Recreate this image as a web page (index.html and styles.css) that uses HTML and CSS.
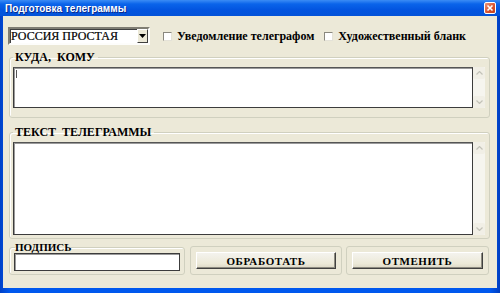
FILE: index.html
```html
<!DOCTYPE html>
<html lang="ru">
<head>
  <meta charset="UTF-8">
  <title>Подготовка телеграммы</title>
  <link rel="stylesheet" href="styles.css">
</head>
<body>
  <div class="window">
    <!-- Title bar -->
    <div class="titlebar">
      <span class="title">Подготовка телеграммы</span>
      <span class="close-btn">
        <svg width="10" height="10" viewBox="0 0 10 10">
          <path d="M2.5 2.5 L7.5 7.5 M7.5 2.5 L2.5 7.5" stroke="#fff" stroke-width="1.6"/>
        </svg>
      </span>
    </div>

    <div class="client">
      <!-- Top row: tariff + options -->
      <div class="top-row">
        <div class="combo">
          <span class="combo-text">РОССИЯ ПРОСТАЯ</span>
          <span class="combo-btn">
            <svg width="7" height="4" viewBox="0 0 7 4"><path d="M0 0 H7 L3.5 4 Z" fill="#000"/></svg>
          </span>
        </div>
        <label class="check"><span class="box"></span>Уведомление телеграфом</label>
        <label class="check check-second"><span class="box"></span>Художественный бланк</label>
      </div>

      <!-- Address -->
      <fieldset class="group group-address">
        <legend>КУДА,&nbsp; КОМУ</legend>
        <div class="field-row">
          <div class="memo memo-address"><span class="caret"></span></div>
          <div class="scrollbar">
            <span class="sb-btn"><svg width="7" height="4" viewBox="0 0 7 4"><path d="M0.5 3.5 L3.5 0.5 L6.5 3.5" fill="none" stroke="#c3c2b8" stroke-width="1.2"/></svg></span>
            <span class="sb-btn"><svg width="7" height="4" viewBox="0 0 7 4"><path d="M0.5 0.5 L3.5 3.5 L6.5 0.5" fill="none" stroke="#c3c2b8" stroke-width="1.2"/></svg></span>
          </div>
        </div>
      </fieldset>

      <!-- Telegram text -->
      <fieldset class="group group-text">
        <legend>ТЕКСТ&nbsp; ТЕЛЕГРАММЫ</legend>
        <div class="field-row">
          <div class="memo memo-text"></div>
          <div class="scrollbar">
            <span class="sb-btn"><svg width="7" height="4" viewBox="0 0 7 4"><path d="M0.5 3.5 L3.5 0.5 L6.5 3.5" fill="none" stroke="#c3c2b8" stroke-width="1.2"/></svg></span>
            <span class="sb-btn"><svg width="7" height="4" viewBox="0 0 7 4"><path d="M0.5 0.5 L3.5 3.5 L6.5 0.5" fill="none" stroke="#c3c2b8" stroke-width="1.2"/></svg></span>
          </div>
        </div>
      </fieldset>

      <!-- Signature + actions -->
      <div class="bottom-row">
        <fieldset class="group group-sign">
          <legend>ПОДПИСЬ</legend>
          <div class="sign-input"></div>
        </fieldset>
        <div class="btn-frame btn-frame-process">
          <button class="btn">ОБРАБОТАТЬ</button>
        </div>
        <div class="btn-frame btn-frame-cancel">
          <button class="btn">ОТМЕНИТЬ</button>
        </div>
      </div>
    </div>
  </div>
</body>
</html>
```

FILE: styles.css
```css
body {
  margin: 0;
  background: #ece9d8;
}

.window {
  width: 500px;
  height: 293px;
  display: flex;
  flex-direction: column;
  background: linear-gradient(to right, #0041c8, #0058ee 2%, #0058ee 98%, #003dc0);
  overflow: hidden;
}

.titlebar {
  height: 16px;
  display: flex;
  align-items: center;
  justify-content: space-between;
  padding: 0 4px 0 5px;
  background: linear-gradient(#3b8cf5 0%, #0a64ea 25%, #0355e0 60%, #0453d8 100%);
}

.title {
  color: #fff;
  font-family: "Liberation Sans", Arial, sans-serif;
  font-size: 10px;
  font-weight: bold;
  text-shadow: 1px 1px 0 #0a2a8a;
}

.close-btn {
  width: 10px;
  height: 10px;
  display: flex;
  align-items: center;
  justify-content: center;
  background: linear-gradient(135deg, #e9957a, #d8512c 60%, #c2401c);
  border: 1px solid #fff;
  border-radius: 2px;
}

.client {
  flex: 1;
  margin: 0 3px 5px 3px;
  background: #ece9d8;
  padding: 11px 7px 0 6px;
  font-family: "Liberation Serif", "Times New Roman", serif;
  color: #000;
}

/* top row */

.top-row {
  height: 18px;
  display: flex;
  align-items: center;
}

.combo {
  width: 138px;
  height: 14px;
  margin-left: -1px;
  display: flex;
  align-items: center;
  background: #fff;
  border: 2px solid;
  border-color: #7f7d73 #fdfdfb #fdfdfb #7f7d73;
  box-shadow: inset 1px 1px 0 #404040;
}

.combo-text {
  flex: 1;
  padding-left: 1px;
  font-size: 12px;
  line-height: 14px;
  white-space: nowrap;
  -webkit-text-stroke: 0.2px #000;
}

.combo-btn {
  width: 9px;
  height: 12px;
  display: flex;
  align-items: center;
  justify-content: center;
  background: #ece9d8;
  border: 1px solid;
  border-color: #fff #404040 #404040 #fff;
}

.check {
  display: flex;
  align-items: center;
  font-size: 12px;
  font-weight: bold;
  margin-left: 13px;
  white-space: nowrap;
}

.check-second {
  margin-left: 10px;
}

.box {
  width: 7px;
  height: 7px;
  margin-right: 5px;
  background: #fff;
  border: 1px solid;
  border-color: #8a887e #e4e2d8 #e4e2d8 #8a887e;
}

/* group boxes */

.group {
  margin: 0;
  border: 1px solid #d0d0bf;
  border-radius: 3px;
  box-shadow: 1px 1px 0 #fff inset;
  min-width: 0;
}

.group legend {
  padding: 0 3px 0 2px;
  margin-left: 0;
  font-size: 12px;
  font-weight: bold;
  line-height: 14px;
}

.group-address {
  margin-top: 5px;
  padding: 3px 4px 9px 3px;
}

.group-text {
  margin-top: 7px;
  padding: 3px 4px 3px 3px;
}

.field-row {
  display: flex;
}

.memo {
  flex: 1;
  background: #fff;
  border: 1px solid #3c3c3c;
  border-top-color: #555;
  box-shadow: inset 1px 1px 0 #9a9a9a;
  position: relative;
}

.memo-address {
  height: 39px;
}

.memo-text {
  height: 91px;
}

.caret {
  position: absolute;
  left: 2px;
  top: 2px;
  width: 1px;
  height: 8px;
  background: #555;
}

.scrollbar {
  width: 12px;
  display: flex;
  flex-direction: column;
  justify-content: space-between;
  background: #f6f5ef;
}

.sb-btn {
  height: 12px;
  display: flex;
  align-items: center;
  justify-content: center;
  background: #f1efe6;
  border-radius: 2px;
}

/* bottom row */

.bottom-row {
  display: flex;
  align-items: flex-end;
  margin-top: 2px;
}

.group-sign {
  width: 176px;
  box-sizing: border-box;
  padding: 0 4px 3px 4px;
}

.group-sign legend {
  font-size: 11px;
  line-height: 12px;
  padding: 0;
  margin-left: 1px;
}

.sign-input {
  height: 16px;
  background: #fff;
  border: 1px solid #3c3c3c;
  box-shadow: inset 1px 1px 0 #9a9a9a;
}

.btn-frame {
  height: 29px;
  box-sizing: border-box;
  border: 1px solid #d0d0bf;
  border-radius: 3px;
  padding: 5px 5px;
  display: flex;
}

.btn-frame-process {
  width: 152px;
  margin-left: 5px;
}

.btn-frame-cancel {
  width: 143px;
  margin-left: 4px;
}

.btn {
  flex: 1;
  padding: 0;
  font-family: "Liberation Serif", "Times New Roman", serif;
  font-size: 11px;
  font-weight: bold;
  letter-spacing: 0.6px;
  color: #000;
  background: linear-gradient(#f4f3ee 0%, #ece9d8 70%, #dcd8c6 100%);
  border: 1px solid;
  border-color: #fff #404040 #404040 #fff;
  box-shadow: inset -1px -1px 0 #8d8b80;
  cursor: pointer;
}
```
